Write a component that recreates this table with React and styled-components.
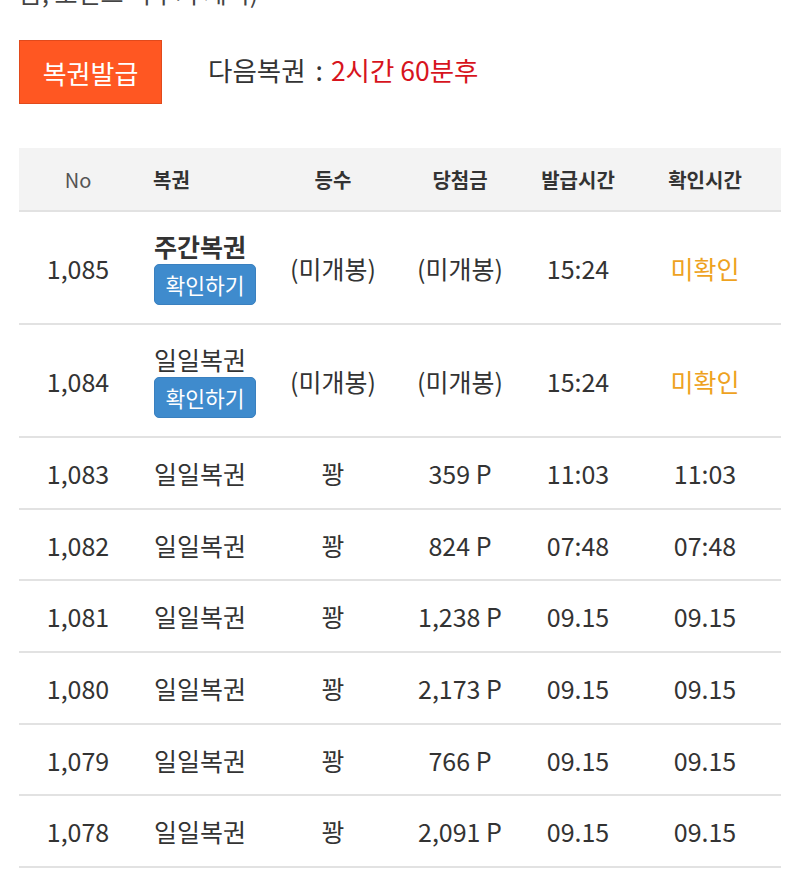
import styled, { createGlobalStyle } from "styled-components";

const GlobalStyle = createGlobalStyle`
  html, body {
    margin: 0;
    padding: 0;
    background: #fff;
  }
  body {
    font-family: "Noto Sans CJK KR", "Noto Sans", sans-serif;
    color: #333;
  }
`;

const Page = styled.div`
  padding: 0 19px;
  overflow: hidden;
  height: 879px;
`;

const Notice = styled.p`
  margin: -25px 0 0;
  font-size: 25px;
  line-height: 34px;
  color: #444;
  white-space: nowrap;
`;

const IssueBar = styled.div`
  display: flex;
  align-items: center;
  gap: 46px;
  margin-top: 31px;
`;

const IssueButton = styled.button`
  width: 143px;
  height: 64px;
  background: #ff5722;
  border: 1px solid #e14a1c;
  color: #fff;
  font-family: inherit;
  font-size: 26px;
  padding: 0;
  cursor: pointer;
`;

const NextInfo = styled.div`
  font-size: 26.5px;
  color: #333;
  margin-bottom: 6px;
`;

const Colon = styled.span`
  margin: 0 8px 0 10px;
`;

const Remain = styled.span`
  color: #d7141d;
`;

const Table = styled.div`
  margin-top: 44px;
  width: 762px;
`;

const Row = styled.div`
  display: grid;
  grid-template-columns: 118px 126px 140px 114px 122px 132px;
  align-items: center;
  min-height: ${(p) => p.$height}px;
  border-bottom: 2px solid #e2e2e2;
  background: ${(p) => (p.$head ? "#f3f3f3" : "#fff")};
`;

const HeadCell = styled.div`
  text-align: ${(p) => (p.$left ? "left" : "center")};
  padding-left: ${(p) => (p.$left ? "16px" : "0")};
  font-size: 20px;
  font-weight: ${(p) => (p.$light ? 400 : 700)};
  color: ${(p) => (p.$light ? "#555" : "#333")};
`;

const Cell = styled.div`
  text-align: center;
  font-size: 25px;
  color: ${(p) => p.$color || "#333"};
`;

const NameCell = styled.div`
  display: flex;
  flex-direction: column;
  align-items: flex-start;
  padding-left: 17px;
  gap: 2px;
`;

const Name = styled.span`
  font-size: 25px;
  font-weight: ${(p) => (p.$bold ? 700 : 400)};
  color: #333;
  line-height: 32px;
`;

const CheckButton = styled.button`
  width: 102px;
  height: 41px;
  background: #3f8bcd;
  border: 1px solid #3a80bf;
  border-radius: 5px;
  color: #fff;
  font-family: inherit;
  font-size: 21.5px;
  padding: 0;
`;

const rows = [
  { no: "1,085", name: "주간복권", bold: true, open: false, prize: "(미개봉)", rank: "(미개봉)", issued: "15:24", checked: null },
  { no: "1,084", name: "일일복권", open: false, prize: "(미개봉)", rank: "(미개봉)", issued: "15:24", checked: null },
  { no: "1,083", name: "일일복권", open: true, rank: "꽝", prize: "359 P", issued: "11:03", checked: "11:03" },
  { no: "1,082", name: "일일복권", open: true, rank: "꽝", prize: "824 P", issued: "07:48", checked: "07:48" },
  { no: "1,081", name: "일일복권", open: true, rank: "꽝", prize: "1,238 P", issued: "09.15", checked: "09.15" },
  { no: "1,080", name: "일일복권", open: true, rank: "꽝", prize: "2,173 P", issued: "09.15", checked: "09.15" },
  { no: "1,079", name: "일일복권", open: true, rank: "꽝", prize: "766 P", issued: "09.15", checked: "09.15" },
  { no: "1,078", name: "일일복권", open: true, rank: "꽝", prize: "2,091 P", issued: "09.15", checked: "09.15" },
];

export default function App() {
  return (
    <>
      <GlobalStyle />
      <Page>
        <Notice>음, 포인트 바꾸기 제외)</Notice>
        <IssueBar>
          <IssueButton>복권발급</IssueButton>
          <NextInfo>
            다음복권<Colon>:</Colon>
            <Remain>2시간 60분후</Remain>
          </NextInfo>
        </IssueBar>
        <Table>
          <Row $head $height={62}>
            <HeadCell $light>No</HeadCell>
            <HeadCell $left>복권</HeadCell>
            <HeadCell>등수</HeadCell>
            <HeadCell>당첨금</HeadCell>
            <HeadCell>발급시간</HeadCell>
            <HeadCell>확인시간</HeadCell>
          </Row>
          {rows.map((r) => (
            <Row key={r.no} $height={r.open ? 69.7 : 111}>
              <Cell>{r.no}</Cell>
              <NameCell>
                <Name $bold={r.bold}>{r.name}</Name>
                {!r.open && <CheckButton>확인하기</CheckButton>}
              </NameCell>
              <Cell>{r.rank}</Cell>
              <Cell>{r.prize}</Cell>
              <Cell>{r.issued}</Cell>
              <Cell $color={r.checked ? "#333" : "#eea21f"}>
                {r.checked || "미확인"}
              </Cell>
            </Row>
          ))}
        </Table>
      </Page>
    </>
  );
}
